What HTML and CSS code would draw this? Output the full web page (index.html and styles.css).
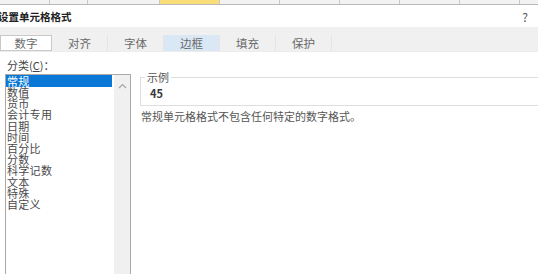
FILE: index.html
```html
<!DOCTYPE html>
<html lang="zh-CN">
<head>
  <meta charset="UTF-8">
  <title>设置单元格格式</title>
  <link rel="stylesheet" href="styles.css">
</head>
<body>
  <div class="sheet-strip">
    <span class="col" style="width: 50px"></span>
    <span class="col" style="width: 38px"></span>
    <span class="col" style="width: 72px"></span>
    <span class="col picked" style="width: 60px"></span>
    <span class="col" style="width: 60px"></span>
    <span class="col" style="width: 60px"></span>
    <span class="col" style="width: 60px"></span>
    <span class="col" style="width: 60px"></span>
    <span class="col" style="width: 60px"></span>
  </div>

  <div class="titlebar">
    <span class="title">设置单元格格式</span>
    <span class="help">?</span>
  </div>

  <div class="tabs">
    <div class="tab active">数字</div>
    <div class="tab">对齐</div>
    <div class="tab">字体</div>
    <div class="tab hover">边框</div>
    <div class="tab">填充</div>
    <div class="tab">保护</div>
  </div>

  <div class="content">
    <div class="left">
      <div class="label">分类(<u>C</u>)：</div>
      <div class="listbox">
        <ul class="items">
          <li class="selected">常规</li>
          <li>数值</li>
          <li>货币</li>
          <li>会计专用</li>
          <li>日期</li>
          <li>时间</li>
          <li>百分比</li>
          <li>分数</li>
          <li>科学记数</li>
          <li>文本</li>
          <li>特殊</li>
          <li>自定义</li>
        </ul>
        <div class="scrollbar">
          <svg class="arrow" width="9" height="6" viewBox="0 0 9 6">
            <path d="M1 5 L4.5 1.5 L8 5" fill="none" stroke="#a6a6a6" stroke-width="1.2"/>
          </svg>
        </div>
      </div>
    </div>

    <div class="right">
      <fieldset class="sample">
        <legend>示例</legend>
        <div class="sample-value">45</div>
      </fieldset>
      <p class="desc">常规单元格格式不包含任何特定的数字格式。</p>
    </div>
  </div>
</body>
</html>
```

FILE: styles.css
```css
* { box-sizing: border-box; }
body {
  margin: 0;
  background: #fff;
  color: #333;
  font-family: "Noto Sans CJK SC", "Liberation Sans", sans-serif;
  overflow: hidden;
}

.sheet-strip {
  display: flex;
  height: 5px;
  background: #f2f2f2;
  border-bottom: 1px solid #b9b9b9;
}
.col {
  height: 100%;
  border-right: 1px solid #c8c8c8;
}
.col.picked { background: #f9de78; }

.titlebar {
  display: flex;
  justify-content: space-between;
  align-items: center;
  height: 22px;
  padding-right: 10px;
}
.title {
  margin-left: -2px;
  font-size: 10.5px;
  font-weight: bold;
  color: #222;
}
.help {
  font-size: 12px;
  color: #555;
}

.tabs {
  display: flex;
  height: 25px;
  padding-top: 8px;
  background: #f0f0f0;
  border-bottom: 1px solid #ececec;
}
.tab {
  width: 56px;
  height: 16px;
  line-height: 16px;
  text-align: center;
  font-size: 11.5px;
  color: #6a6a6a;
  border-right: 1px solid #e4e4e4;
}
.tab.active {
  width: 52px;
  background: #fff;
  border: 1px solid #c9c9c9;
  line-height: 14px;
}
.tab.hover { background: #dae8f6; }

.content {
  display: flex;
  padding: 6px 0 0 5px;
}

.left { width: 126px; }
.label {
  padding-left: 2px;
  font-size: 11px;
  line-height: 15px;
  color: #444;
}
.listbox {
  display: flex;
  height: 210px;
  margin-top: 1px;
  border: 1px solid #a9a9a9;
  border-bottom: none;
}
.items {
  flex: 1;
  margin: 0;
  padding: 0 2px 0 0;
  list-style: none;
  font-size: 11px;
  letter-spacing: 0.3px;
  line-height: 11.2px;
  color: #4a4a4a;
}
.items li { padding-left: 1px; }
.items li.selected {
  height: 12px;
  line-height: 12px;
  background: #0a78d6;
  color: #fff;
}
.scrollbar {
  width: 16px;
  background: #f0f0f0;
  display: flex;
  justify-content: center;
  padding-top: 8px;
}
.arrow { display: block; }

.right {
  flex: 1;
  margin-left: 9px;
  margin-right: -12px;
}
.sample {
  margin: 13px 0 0;
  padding: 0 8px 3px 9px;
  height: 35px;
  border: 1px solid #dedede;
}
.sample legend {
  margin-left: -5px;
  padding: 0 2px;
  font-size: 11px;
  line-height: 13px;
  color: #555;
}
.sample-value {
  padding-top: 3px;
  font-size: 11px;
  font-weight: 600;
  line-height: 13px;
  color: #3a3a3a;
}
.desc {
  margin: 3px 0 0 1px;
  font-size: 11px;
  line-height: 14px;
  color: #555;
}
```
